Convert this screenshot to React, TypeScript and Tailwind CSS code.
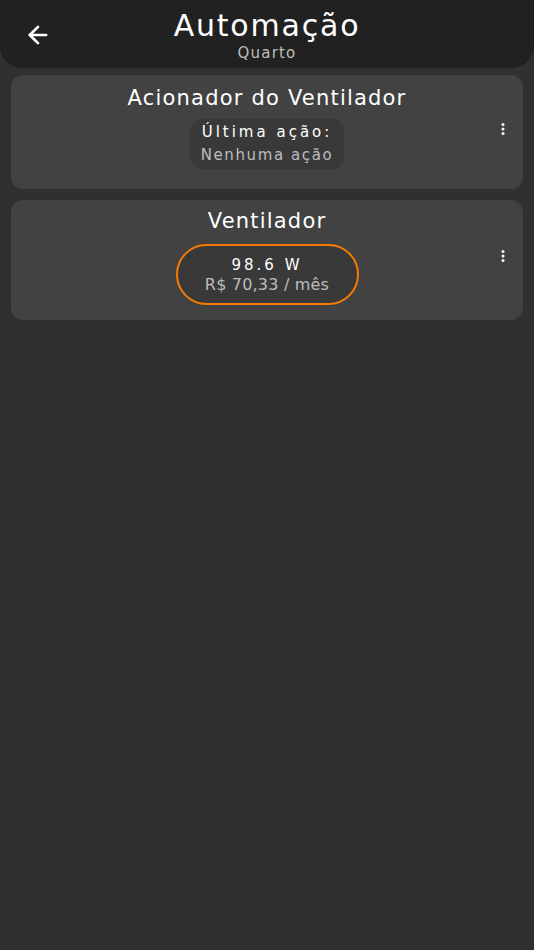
import React from "react";
import { ArrowLeft } from "lucide-react";

function Kebab() {
  return (
    <svg width="6" height="12" viewBox="0 0 6 12" className="text-white">
      <circle cx="3" cy="1.6" r="1.5" fill="currentColor" />
      <circle cx="3" cy="6" r="1.5" fill="currentColor" />
      <circle cx="3" cy="10.4" r="1.5" fill="currentColor" />
    </svg>
  );
}

export default function App() {
  return (
    <div
      className="min-h-[950px] w-full bg-[#303030] text-white"
      style={{ fontFamily: '"DejaVu Sans", sans-serif' }}
    >
      <header className="relative flex h-[68px] flex-col items-center rounded-b-[22px] bg-[#212121] pt-[7px]">
        <button className="absolute left-[24px] top-[21px] text-white">
          <ArrowLeft size={28} strokeWidth={2.3} />
        </button>
        <h1 className="text-[30px] leading-[37px] tracking-[1.8px]">Automação</h1>
        <span className="mt-[1px] text-[15px] leading-[17px] tracking-[1.2px] text-[#bdbdbd]">Quarto</span>
      </header>

      <main className="flex flex-col gap-[11px] px-[11px] pt-[7px]">
        <section className="relative flex h-[114px] flex-col items-center rounded-[12px] bg-[#424242] pt-[9px]">
          <h2 className="text-[21px] leading-[28px] tracking-[1.2px]">Acionador do Ventilador</h2>
          <div className="mt-[7px] flex h-[50px] w-[154px] flex-col items-center justify-center rounded-[12px] bg-[#393939]">
            <span className="text-[15px] leading-[23px] tracking-[3px]">Última ação:</span>
            <span className="text-[15px] leading-[23px] tracking-[1.6px] text-[#bdbdbd]">Nenhuma ação</span>
          </div>
          <div className="absolute right-[17px] top-[48px]">
            <Kebab />
          </div>
        </section>

        <section className="relative flex h-[120px] flex-col items-center rounded-[12px] bg-[#424242] pt-[7px]">
          <h2 className="text-[21px] leading-[28px] tracking-[1.2px]">Ventilador</h2>
          <div className="mt-[9px] flex h-[61px] w-[183px] flex-col items-center justify-center rounded-full border-[2.5px] border-[#f57c00] bg-[#393939]">
            <span className="text-[15px] leading-[19px] tracking-[3px]">98.6 W</span>
            <span className="text-[16px] leading-[19px] tracking-[0.2px] text-[#bdbdbd]">R$ 70,33 / mês</span>
          </div>
          <div className="absolute right-[17px] top-[50px]">
            <Kebab />
          </div>
        </section>
      </main>
    </div>
  );
}
